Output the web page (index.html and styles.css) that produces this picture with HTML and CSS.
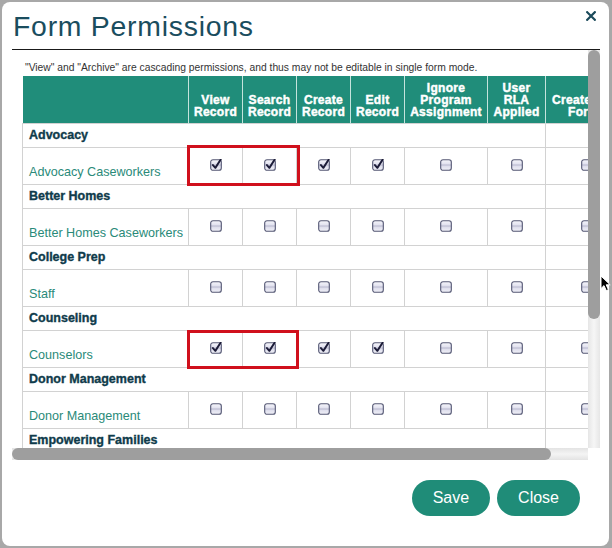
FILE: index.html
```html
<!DOCTYPE html>
<html>
<head>
<meta charset="utf-8">
<link rel="stylesheet" href="styles.css">
</head>
<body>
<svg class="defs" width="0" height="0" aria-hidden="true">
  <defs>
    <linearGradient id="cbfill" x1="0" y1="0" x2="0" y2="1">
      <stop offset="0" stop-color="#f7f7fc"/>
      <stop offset="0.40" stop-color="#e2e2ef"/>
      <stop offset="0.50" stop-color="#b9b9cf"/>
      <stop offset="0.60" stop-color="#dedeec"/>
      <stop offset="1" stop-color="#f1f1f8"/>
    </linearGradient>
    <symbol id="cb-off" viewBox="0 0 13 13">
      <rect x="0.75" y="0.75" width="11.5" height="11.5" rx="2.5" fill="url(#cbfill)" stroke="#555874" stroke-width="1.2"/>
    </symbol>
    <symbol id="cb-on" viewBox="0 0 13 13">
      <rect x="0.75" y="0.75" width="11.5" height="11.5" rx="2.5" fill="url(#cbfill)" stroke="#555874" stroke-width="1.2"/>
      <path d="M3.2 6.6 L5.8 9.6 L11.6 0.6" fill="none" stroke="#1c1c38" stroke-width="2.1" stroke-linecap="round" stroke-linejoin="round"/>
    </symbol>
  </defs>
</svg>

<div class="dialog">
  <div class="dlg-head">
    <h1 class="title">Form Permissions</h1>
    <svg class="close-x" width="10" height="10" viewBox="0 0 10 10"><path d="M1.2 1.2 L8.8 8.8 M8.8 1.2 L1.2 8.8" stroke="#1b4a5a" stroke-width="2.2" stroke-linecap="square"/></svg>
  </div>

  <div class="scrollbox">
    <div class="viewport">
      <p class="note">"View" and "Archive" are cascading permissions, and thus may not be editable in single form mode.</p>
      <table class="perm">
        <colgroup>
          <col class="c-name"><col class="c-sm"><col class="c-sm"><col class="c-sm"><col class="c-sm"><col class="c-ign"><col class="c-rla"><col class="c-last">
        </colgroup>
        <thead>
          <tr>
            <th></th>
            <th>View<br>Record</th>
            <th>Search<br>Record</th>
            <th>Create<br>Record</th>
            <th>Edit<br>Record</th>
            <th>Ignore<br>Program<br>Assignment</th>
            <th>User<br>RLA<br>Applied</th>
            <th class="last">Create<br><span class="last-form">Form</span></th>
          </tr>
        </thead>
        <tbody>
          <tr class="group"><td colspan="7">Advocacy</td><td></td></tr>
          <tr class="item">
            <td class="name">Advocacy Caseworkers</td>
            <td class="mark"><div class="hl"></div><svg class="cb"><use href="#cb-on"/></svg></td>
            <td><svg class="cb"><use href="#cb-on"/></svg></td>
            <td><svg class="cb"><use href="#cb-on"/></svg></td>
            <td><svg class="cb"><use href="#cb-on"/></svg></td>
            <td><svg class="cb"><use href="#cb-off"/></svg></td>
            <td><svg class="cb"><use href="#cb-off"/></svg></td>
            <td><svg class="cb"><use href="#cb-off"/></svg></td>
          </tr>
          <tr class="group"><td colspan="7">Better Homes</td><td></td></tr>
          <tr class="item">
            <td class="name">Better Homes Caseworkers</td>
            <td><svg class="cb"><use href="#cb-off"/></svg></td>
            <td><svg class="cb"><use href="#cb-off"/></svg></td>
            <td><svg class="cb"><use href="#cb-off"/></svg></td>
            <td><svg class="cb"><use href="#cb-off"/></svg></td>
            <td><svg class="cb"><use href="#cb-off"/></svg></td>
            <td><svg class="cb"><use href="#cb-off"/></svg></td>
            <td><svg class="cb"><use href="#cb-off"/></svg></td>
          </tr>
          <tr class="group"><td colspan="7">College Prep</td><td></td></tr>
          <tr class="item">
            <td class="name">Staff</td>
            <td><svg class="cb"><use href="#cb-off"/></svg></td>
            <td><svg class="cb"><use href="#cb-off"/></svg></td>
            <td><svg class="cb"><use href="#cb-off"/></svg></td>
            <td><svg class="cb"><use href="#cb-off"/></svg></td>
            <td><svg class="cb"><use href="#cb-off"/></svg></td>
            <td><svg class="cb"><use href="#cb-off"/></svg></td>
            <td><svg class="cb"><use href="#cb-off"/></svg></td>
          </tr>
          <tr class="group"><td colspan="7">Counseling</td><td></td></tr>
          <tr class="item">
            <td class="name">Counselors</td>
            <td class="mark"><div class="hl hl2"></div><svg class="cb"><use href="#cb-on"/></svg></td>
            <td><svg class="cb"><use href="#cb-on"/></svg></td>
            <td><svg class="cb"><use href="#cb-on"/></svg></td>
            <td><svg class="cb"><use href="#cb-on"/></svg></td>
            <td><svg class="cb"><use href="#cb-off"/></svg></td>
            <td><svg class="cb"><use href="#cb-off"/></svg></td>
            <td><svg class="cb"><use href="#cb-off"/></svg></td>
          </tr>
          <tr class="group"><td colspan="7">Donor Management</td><td></td></tr>
          <tr class="item">
            <td class="name">Donor Management</td>
            <td><svg class="cb"><use href="#cb-off"/></svg></td>
            <td><svg class="cb"><use href="#cb-off"/></svg></td>
            <td><svg class="cb"><use href="#cb-off"/></svg></td>
            <td><svg class="cb"><use href="#cb-off"/></svg></td>
            <td><svg class="cb"><use href="#cb-off"/></svg></td>
            <td><svg class="cb"><use href="#cb-off"/></svg></td>
            <td><svg class="cb"><use href="#cb-off"/></svg></td>
          </tr>
          <tr class="group"><td colspan="7">Empowering Families</td><td></td></tr>
        </tbody>
      </table>
    </div>
    <div class="vbar"><div class="vthumb"></div></div>
    <div class="hbar"><div class="hthumb"></div></div>
    <div class="corner"></div>
  </div>

  <div class="actions">
    <button class="btn">Save</button>
    <button class="btn">Close</button>
  </div>
</div>

<svg class="cursor" width="11" height="17" viewBox="0 0 11 17"><path d="M1 1 L1 13.5 L4 10.6 L6.3 15.6 L8.4 14.7 L6.2 9.8 L10.2 9.8 Z" fill="#000" stroke="#fff" stroke-width="1" stroke-linejoin="round"/></svg>
</body>
</html>
```
FILE: styles.css
```css
html, body {
  margin: 0;
  padding: 0;
}
body {
  background: #a8a8a8;
  width: 612px;
  height: 548px;
  overflow: hidden;
  font-family: "Liberation Sans", Arial, sans-serif;
  position: relative;
}
.defs {
  position: absolute;
  width: 0;
  height: 0;
}
.dialog {
  margin: 2px 3px 2px 2px;
  height: 544px;
  box-sizing: border-box;
  background: #fff;
  border-radius: 8px;
  padding: 7px 9px 0 10px;
  display: flex;
  flex-direction: column;
}
.dlg-head {
  display: flex;
  justify-content: space-between;
  align-items: flex-start;
  border-bottom: 1px solid #1a1a1a;
  padding-bottom: 6px;
}
.title {
  margin: 0;
  font-weight: normal;
  font-size: 28.4px;
  line-height: 34px;
  letter-spacing: 0.75px;
  color: #1a4d5e;
  padding-left: 1px;
}
.close-x {
  margin-top: 2px;
  margin-right: 4px;
}
.scrollbox {
  flex: none;
  display: grid;
  grid-template-columns: 576px 12px;
  grid-template-rows: 398px 12px;
}
.viewport {
  overflow: hidden;
  padding: 12px 0 0 10px;
}
.vbar {
  background: linear-gradient(90deg, #e6e6e6, #f6f6f6 50%, #e6e6e6);
}
.vthumb {
  height: 269px;
  background: #9e9e9e;
  border-radius: 6px;
}
.hbar {
  background: linear-gradient(#e3e3e3, #f4f4f4 50%, #e3e3e3);
}
.hthumb {
  width: 539px;
  height: 12px;
  background: #9e9e9e;
  border-radius: 6px;
}
.corner {
  background: #fff;
}
.note {
  margin: 0 0 2px 3px;
  font-size: 10.3px;
  line-height: 12px;
  color: #333;
  white-space: nowrap;
}
.perm {
  border-collapse: collapse;
  table-layout: fixed;
  width: 605px;
}
.c-name { width: 166px; }
.c-sm { width: 54px; }
.c-ign { width: 83px; }
.c-rla { width: 58px; }
.c-last { width: 82px; }

.perm th {
  background: #208d7a;
  color: #fff;
  font-weight: bold;
  font-size: 12px;
  line-height: 12px;
  letter-spacing: 0.3px;
  text-align: center;
  vertical-align: bottom;
  padding: 0 2px 5px;
  height: 47px;
  box-sizing: border-box;
  border-left: 1px solid #c4e3dc;
  white-space: nowrap;
  overflow: hidden;
  -webkit-text-stroke: 0.45px #fff;
}
.perm th:first-child {
  border-left: none;
}
.perm th.last {
  text-align: left;
  padding-left: 6px;
}
.last-form {
  padding-left: 16px;
}
.perm td {
  border: 1px solid #d2d2d2;
  padding: 0;
}
.group td {
  height: 24px;
  box-sizing: border-box;
  padding: 0 6px;
  font-weight: bold;
  font-size: 12.5px;
  color: #0f3b4b;
  vertical-align: middle;
  white-space: nowrap;
  -webkit-text-stroke: 0.35px #0f3b4b;
}
.item td {
  height: 37px;
  box-sizing: border-box;
  text-align: center;
  vertical-align: middle;
}
.item td.name {
  text-align: left;
  vertical-align: bottom;
  padding: 0 6px 5px;
  font-size: 12.6px;
  line-height: 14px;
  color: #2a8a79;
  white-space: nowrap;
}
.cb {
  display: block;
  width: 12px;
  height: 12px;
  margin: -1px auto 0;
}
.mark {
  position: relative;
}
.hl {
  position: absolute;
  left: -2px;
  top: -3px;
  width: 113px;
  height: 41px;
  box-sizing: border-box;
  border: 3px solid #d0101c;
}
.hl2 {
  top: -1px;
  height: 39px;
  width: 112px;
}
.actions {
  display: flex;
  justify-content: flex-end;
  gap: 7px;
  margin-top: 20px;
  padding-right: 20px;
}
.btn {
  height: 36px;
  border: none;
  border-radius: 18px;
  background: #1f8c78;
  color: #fff;
  font-family: "Liberation Sans", Arial, sans-serif;
  font-size: 16px;
  padding: 0 21px;
  cursor: pointer;
}
.cursor {
  position: absolute;
  left: 600px;
  top: 275px;
}
```
